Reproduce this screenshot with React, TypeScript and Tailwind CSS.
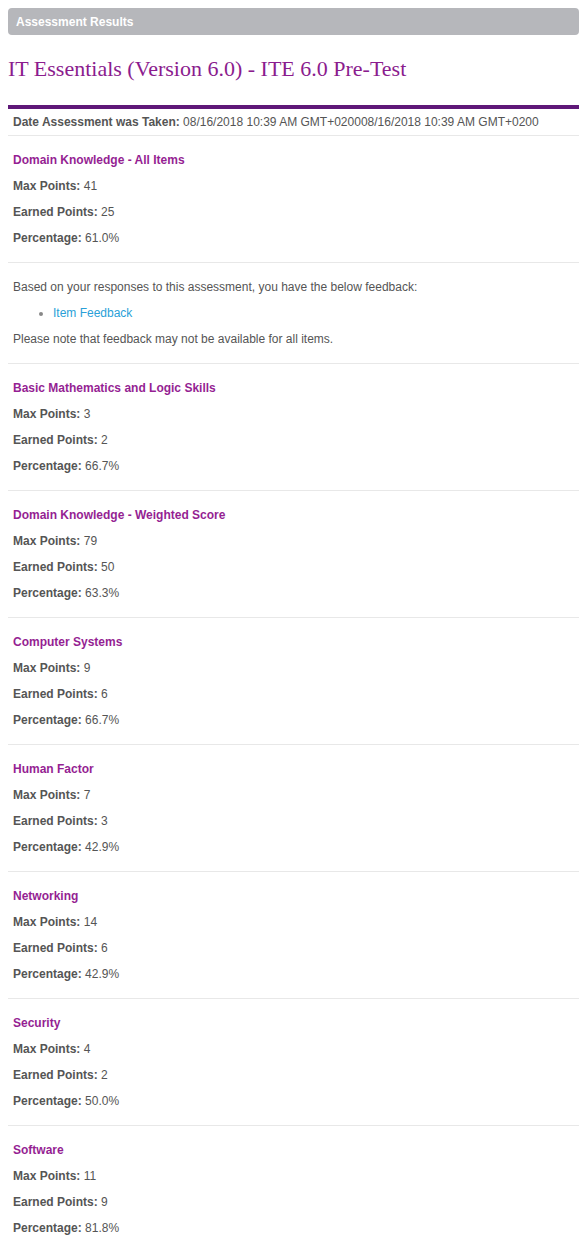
const sections = [
  { title: "Domain Knowledge - All Items", max: 41, earned: 25, pct: "61.0%" },
  { feedback: true },
  { title: "Basic Mathematics and Logic Skills", max: 3, earned: 2, pct: "66.7%" },
  { title: "Domain Knowledge - Weighted Score", max: 79, earned: 50, pct: "63.3%" },
  { title: "Computer Systems", max: 9, earned: 6, pct: "66.7%" },
  { title: "Human Factor", max: 7, earned: 3, pct: "42.9%" },
  { title: "Networking", max: 14, earned: 6, pct: "42.9%" },
  { title: "Security", max: 4, earned: 2, pct: "50.0%" },
  { title: "Software", max: 11, earned: 9, pct: "81.8%" },
];

function Row({ label, value }: { label: string; value: string | number }) {
  return (
    <p className="leading-[26px]">
      <b className="font-bold">{label}:</b> {value}
    </p>
  );
}

export default function App() {
  return (
    <div className="min-h-[1260px] bg-white px-2 pt-2 font-['Liberation_Sans',Arial,sans-serif] text-[12px] text-[#555]">
      <div className="flex h-[27px] items-center rounded-[4px] bg-[#b6b7bb] px-2 text-[12px] font-bold text-white">
        Assessment Results
      </div>

      <h1 className="mt-[21px] font-['Liberation_Serif','Times_New_Roman',serif] text-[22px] leading-[26px] text-[#8b1c8e]">
        IT Essentials (Version 6.0) - ITE 6.0 Pre-Test
      </h1>

      <div className="mt-[23px] h-[4px] bg-[#5f1878]" />

      <div className="border-b border-[#e8e8e8] px-[5px] pt-[3px] pb-[2px] leading-[21px]">
        <b className="font-bold">Date Assessment was Taken:</b> 08/16/2018 10:39 AM GMT+020008/16/2018 10:39 AM GMT+0200
      </div>

      {sections.map((s, i) =>
        s.feedback ? (
          <div key={i} className="border-b border-[#e8e8e8] px-[5px] pt-[11px] pb-[11px]">
            <p className="leading-[26px]">Based on your responses to this assessment, you have the below feedback:</p>
            <ul className="list-disc pl-[40px] leading-[26px] marker:text-[#888]">
              <li>
                <a className="text-[#2a9fd8]">Item Feedback</a>
              </li>
            </ul>
            <p className="leading-[26px]">Please note that feedback may not be available for all items.</p>
          </div>
        ) : (
          <div
            key={i}
            className={`px-[5px] pt-[11px] pb-[11px] ${i < sections.length - 1 ? "border-b border-[#e8e8e8]" : ""}`}
          >
            <p className="font-bold leading-[26px] text-[#951f93]">{s.title}</p>
            <Row label="Max Points" value={s.max!} />
            <Row label="Earned Points" value={s.earned!} />
            <Row label="Percentage" value={s.pct!} />
          </div>
        )
      )}
    </div>
  );
}
